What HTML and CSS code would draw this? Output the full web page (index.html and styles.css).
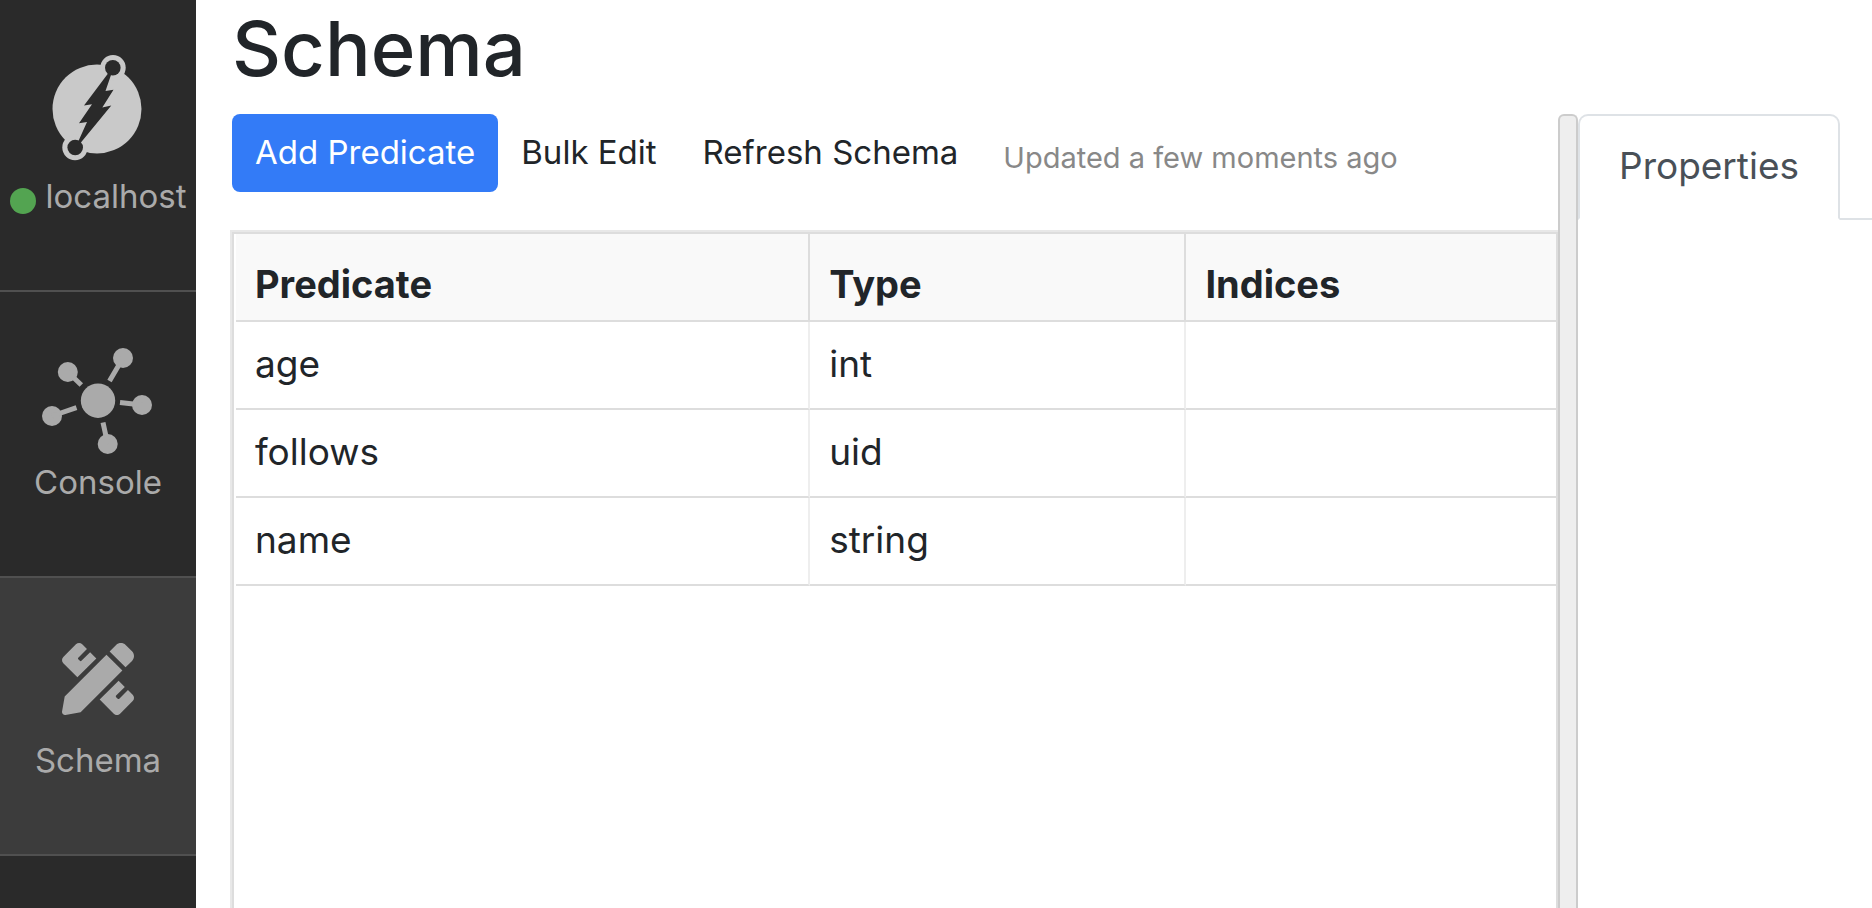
FILE: index.html
```html
<!DOCTYPE html>
<html lang="en">
<head>
<meta charset="utf-8">
<title>Schema</title>
<link rel="stylesheet" href="styles.css">
</head>
<body>
<div class="app">
  <nav class="sidebar">
    <a class="side-item side-item-server" href="#">
      <svg class="side-icon" width="112" height="108" viewBox="42 54 112 108" aria-hidden="true">
        <g fill="#c9c9c9">
          <circle cx="97" cy="109" r="44.5"/>
          <circle cx="113" cy="67.700" r="12.700"/>
          <circle cx="75" cy="147.500" r="12.700"/>
        </g>
        <g fill="#2a2a2a">
          <circle cx="112.800" cy="67.800" r="7.800"/>
          <circle cx="75.200" cy="147.500" r="7.800"/>
          <path d="M108 73.500L84 105.500L92 104.300L79 123.200L87 122L78 142L80.500 143L111.300 105.500L102.300 107.600L113.500 89.800L105.500 91L111.500 73.500Z"/>
        </g>
      </svg>
      <span class="side-label"><span class="status-dot"></span>localhost</span>
    </a>
    <a class="side-item side-item-console" href="#">
      <svg class="side-icon" width="112" height="108" viewBox="42 346 112 108" aria-hidden="true">
        <g fill="#aaa">
          <circle cx="98" cy="400.700" r="17.200"/>
          <circle cx="123" cy="358" r="10"/>
          <circle cx="142" cy="405" r="10"/>
          <circle cx="107.700" cy="444" r="10"/>
          <circle cx="52" cy="416" r="10"/>
          <circle cx="67.800" cy="372" r="10"/>
        </g>
        <path stroke="#aaa" stroke-width="5" d="M123 358L109.500 381M142 405L120 402.500M107.700 444L103 422.500M52 416L76.500 407.700M67.800 372L81.300 385"/>
      </svg>
      <span class="side-label">Console</span>
    </a>
    <a class="side-item side-item-schema" href="#" aria-current="page">
      <svg class="side-icon" width="72" height="94" viewBox="0 0 512 512" aria-hidden="true">
        <path fill="#aaa" d="M109.460 244.040l134.580-134.560-44.120-44.120-61.680 61.680a7.919 7.919 0 0 1-11.210 0l-11.210-11.210c-3.100-3.100-3.100-8.120 0-11.210l61.680-61.680-33.640-33.650C131.470-3.100 111.390-3.100 99 9.290L9.290 99c-12.380 12.390-12.390 32.470 0 44.860l100.170 100.180zm388.470-116.800c18.760-18.760 18.750-49.170 0-67.930l-45.250-45.250c-18.760-18.760-49.180-18.760-67.950 0l-46.020 46.010 113.200 113.200 46.020-46.030zM316.080 82.710l-297 296.960L.32 487.110c-2.530 14.490 10.090 27.110 24.590 24.560l107.450-18.840L429.280 195.900 316.080 82.710zm186.630 285.430l-33.640-33.640-61.680 61.680c-3.100 3.100-8.120 3.100-11.210 0l-11.210-11.210c-3.090-3.100-3.090-8.120 0-11.210l61.680-61.680-44.140-44.140L267.930 402.500l100.210 100.200c12.390 12.390 32.470 12.390 44.860 0l89.710-89.700c12.390-12.390 12.390-32.470 0-44.860z"/>
      </svg>
      <span class="side-label">Schema</span>
    </a>
  </nav>
  <main class="main">
    <h1 class="title">Schema</h1>
    <div class="panels">
      <section class="list-panel">
        <div class="toolbar">
          <button class="btn btn-primary" type="button">Add Predicate</button>
          <button class="btn" type="button">Bulk Edit</button>
          <button class="btn" type="button">Refresh Schema</button>
          <span class="updated">Updated a few moments ago</span>
        </div>
        <div class="grid-frame">
          <div class="grid-inner">
            <table class="grid">
              <colgroup><col class="col-predicate"><col class="col-type"><col class="col-indices"></colgroup>
              <thead>
                <tr><th scope="col">Predicate</th><th scope="col">Type</th><th scope="col">Indices</th></tr>
              </thead>
              <tbody>
                <tr><td>age</td><td>int</td><td></td></tr>
                <tr><td>follows</td><td>uid</td><td></td></tr>
                <tr><td>name</td><td>string</td><td></td></tr>
              </tbody>
            </table>
          </div>
        </div>
      </section>
      <div class="splitter" role="separator" aria-orientation="vertical"></div>
      <section class="detail-panel">
        <div class="tabs" role="tablist">
          <button class="tab" type="button" role="tab" aria-selected="true">Properties</button>
        </div>
      </section>
    </div>
  </main>
</div>
</body>
</html>
```
FILE: styles.css
```css
* {
  box-sizing: border-box;
}

body {
  margin: 0;
  background: #fff;
  color: #212529;
  font-family: Inter, "Liberation Sans", sans-serif;
  font-size: 37px;
}

.app {
  display: flex;
  height: 100vh;
  overflow: hidden;
}

.sidebar {
  flex: none;
  width: 196px;
  background: #2a2a2a;
}

.side-item {
  display: flex;
  flex-direction: column;
  align-items: center;
  gap: 12px;
  padding: 54px 0 72px;
  border-bottom: 2px solid #505050;
  color: #aaa;
  text-decoration: none;
}

.side-item-console {
  gap: 6px;
}

.side-item-schema {
  background: #3c3c3c;
}

.side-icon {
  display: block;
}

.side-label {
  display: flex;
  align-items: center;
  gap: 10px;
  font-size: 33px;
  line-height: 44px;
  white-space: nowrap;
}

.status-dot {
  width: 26px;
  height: 26px;
  margin-top: 10px;
  border-radius: 50%;
  background: #53a451;
}

.main {
  display: flex;
  flex: 1;
  flex-direction: column;
  min-width: 0;
  padding-left: 34px;
}

.title {
  margin: 0 0 18px 2px;
  font-size: 76px;
  font-weight: 500;
  line-height: 96px;
}

.panels {
  display: flex;
  flex: 1;
  min-height: 0;
}

.list-panel {
  display: flex;
  flex: 664 1 0;
  flex-direction: column;
  min-width: 0;
}

.toolbar {
  display: flex;
  align-items: center;
  margin: 0 0 38px 2px;
  white-space: nowrap;
}

.btn {
  padding: 16px 23px 18px;
  border: 0;
  border-radius: 8px;
  background: transparent;
  color: inherit;
  font: inherit;
  font-size: 33px;
  line-height: 44px;
}

.btn-primary {
  background: #337bf7;
  color: #fff;
}

.updated {
  margin: 8px 0 0 22px;
  color: #888;
  font-size: 29px;
}

.grid-frame {
  flex: 1;
  border: solid #e8e8e8;
  border-width: 2px 0 0 2px;
}

.grid-inner {
  height: 100%;
  padding-left: 2px;
  border: solid #ddd;
  border-width: 2px 2px 0 2px;
}

.grid {
  width: 100%;
  border-spacing: 0;
  table-layout: fixed;
}

.col-predicate {
  width: 43.5%;
}

.col-type {
  width: 28.5%;
}

.grid th,
.grid td {
  height: 88px;
  padding: 0 19px 2px;
  border-right: 2px solid #eee;
  border-bottom: 2px solid #ddd;
  text-align: left;
  line-height: 48px;
}

.grid th {
  padding: 14px 19px 0;
  border-right-color: #ddd;
  background: #f9f9f9;
  font-size: 38px;
  font-weight: 700;
}

.grid th:last-child,
.grid td:last-child {
  border-right: 0;
}

.splitter {
  flex: none;
  width: 20px;
  border: 2px solid #ccc;
  border-bottom: 0;
  border-radius: 6px 6px 0 0;
  background: #eee;
  cursor: col-resize;
}

.detail-panel {
  flex: 147 1 0;
  min-width: 0;
}

.tabs {
  display: flex;
  border-bottom: 2px solid #dee2e6;
}

.tab {
  margin-bottom: -2px;
  padding: 26px 39px 28px;
  border: 2px solid #dee2e6;
  border-bottom-color: #fff;
  border-radius: 10px 10px 0 0;
  background: #fff;
  color: #495057;
  font: inherit;
  line-height: 48px;
}
```
